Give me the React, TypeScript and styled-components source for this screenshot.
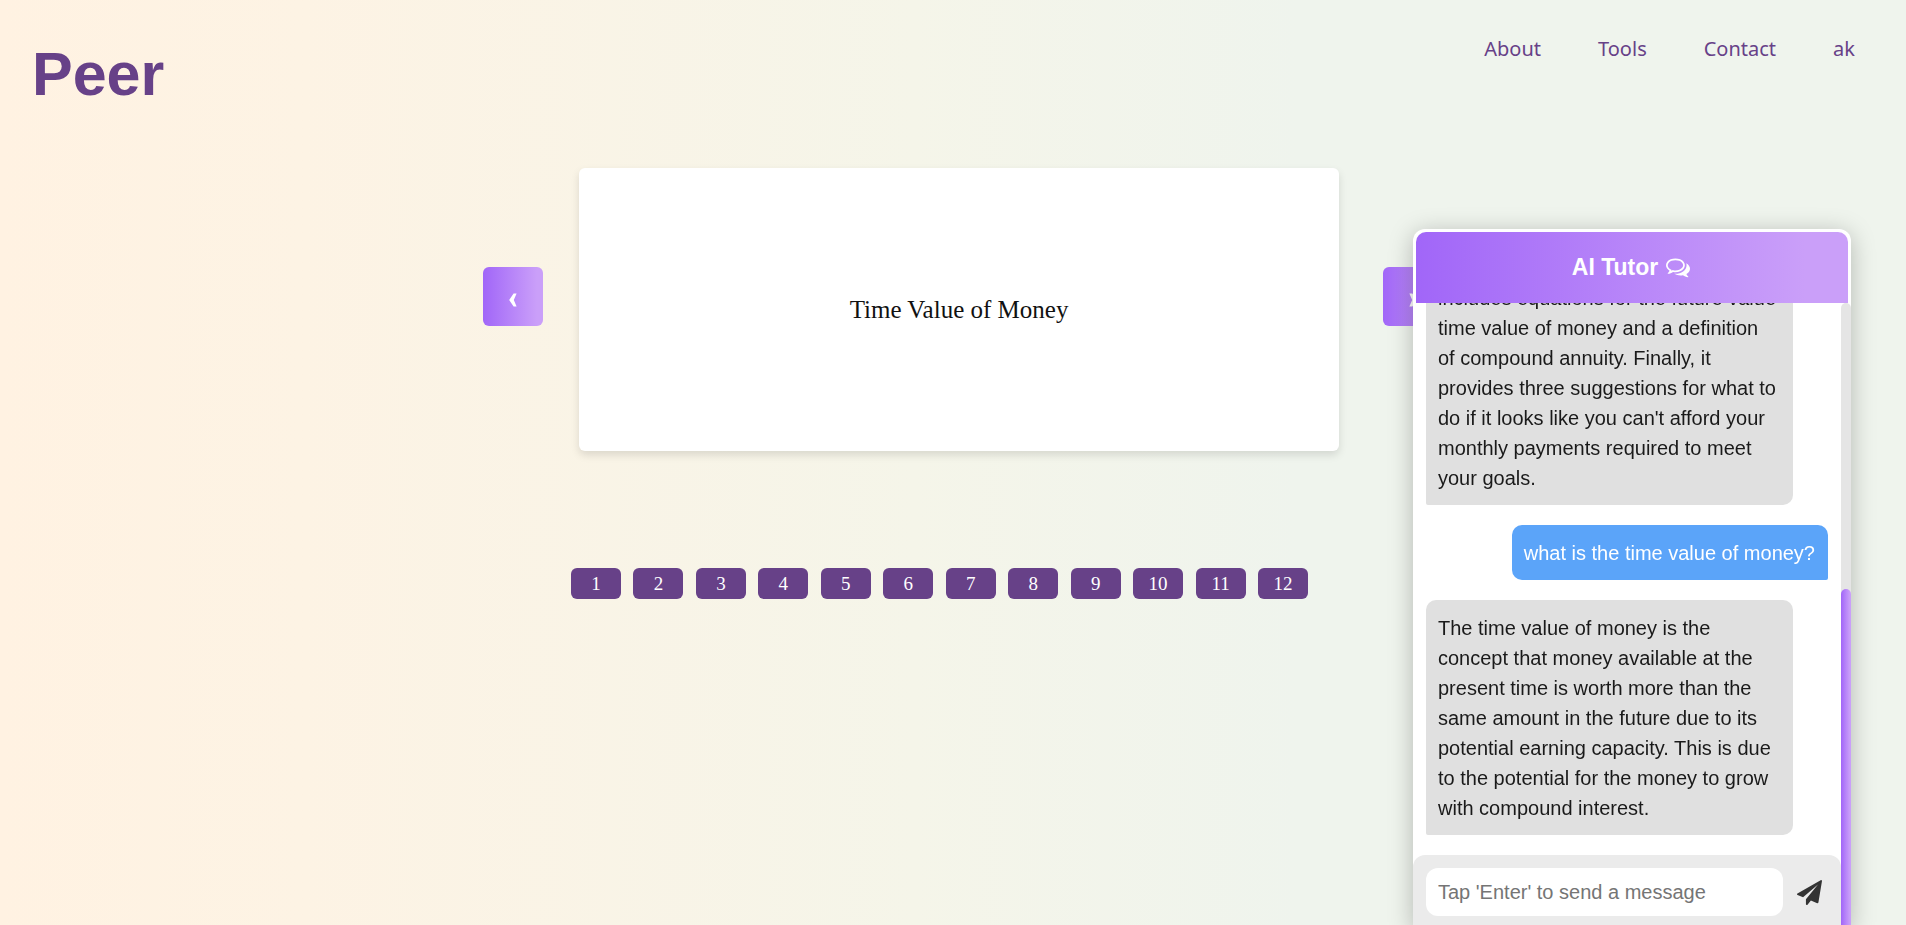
import React from "react";
import styled, { createGlobalStyle } from "styled-components";

const sans = `"Liberation Sans", Arial, sans-serif`;
const serif = `"Liberation Serif", "Times New Roman", serif`;
const violet = "linear-gradient(to right, #a166f8, #ca9ff9 90%)";

const GlobalStyle = createGlobalStyle`
  *, *::before, *::after { box-sizing: border-box; }
  body { margin: 0; font-family: ${serif}; }
`;

const Page = styled.div`
  min-height: 100vh;
  overflow: hidden;
  background: linear-gradient(to right, #fff2e2 0%, #fdf3e4 16%, #f5f5e9 48%, #eff4ed 68%);
`;

const Header = styled.header`
  display: flex;
  justify-content: space-between;
  align-items: flex-start;
  height: 168px;
  padding: 36px 51px 0 32px;
`;

const Brand = styled.h1`
  margin: 0;
  font: bold 61px/76px ${sans};
  color: #674188;
`;

const Nav = styled.nav`
  display: flex;
  gap: 57px;
`;

const NavLink = styled.a`
  font: 20px/26px "Noto Sans", "Open Sans", sans-serif;
  color: #674188;
  text-decoration: none;
`;

const Main = styled.main`
  display: flex;
  flex-direction: column;
  align-items: center;
`;

const Deck = styled.section`
  display: flex;
  gap: 36px;
  padding-left: 20px;
`;

const Card = styled.article`
  display: flex;
  align-items: center;
  justify-content: center;
  width: 760px;
  height: 283px;
  margin-right: 8px;
  border-radius: 6px;
  background: #fff;
  box-shadow: 0 4px 8px rgba(0, 0, 0, 0.12);
  font-size: 25px;
  color: #111;
`;

const StepButton = styled.button`
  display: flex;
  align-items: center;
  justify-content: center;
  width: 60px;
  height: 59px;
  margin-top: 99px;
  padding: 6px 0 0;
  border: 0;
  border-radius: 6px;
  background: ${violet};
  color: #fff;
`;

const Pager = styled.nav`
  display: flex;
  justify-content: space-between;
  width: 737px;
  margin: 117px 27px 0 0;
`;

const PageButton = styled.button`
  width: 50px;
  height: 31px;
  padding: 0;
  border: 0;
  border-radius: 6px;
  background: #674188;
  font: 19px/31px ${serif};
  color: #fff;
`;

const Chat = styled.aside`
  position: fixed;
  top: 229px;
  right: 55px;
  bottom: -4px;
  display: flex;
  flex-direction: column;
  width: 438px;
  border-radius: 12px 12px 0 0;
  background: #fff;
  box-shadow: 0 4px 24px rgba(0, 0, 0, 0.25);
  font: 20px/30px ${sans};
`;

const ChatHeader = styled.h2`
  display: flex;
  flex: none;
  align-items: center;
  justify-content: center;
  gap: 8px;
  height: 71px;
  margin: 3px 3px 0;
  padding: 0 2px 2px 0;
  border-radius: 10px 10px 0 0;
  background: ${violet};
  font-size: 23px;
  color: #fff;
`;

const ChatBody = styled.div`
  display: flex;
  flex: 1;
  min-height: 0;
`;

const Conversation = styled.div`
  display: flex;
  flex: 1;
  flex-direction: column;
  min-width: 0;
`;

const Messages = styled.div`
  display: flex;
  flex: 1;
  flex-direction: column;
  justify-content: flex-end;
  gap: 20px;
  min-height: 0;
  padding: 0 13px 20px;
  overflow: hidden;
`;

const Bubble = styled.p<{ $mine?: boolean }>`
  flex: none;
  align-self: ${(p) => (p.$mine ? "flex-end" : "flex-start")};
  max-width: 367px;
  margin: 0;
  padding: ${(p) => (p.$mine ? "13px 13px 12px 12px" : "13px 15px 12px 12px")};
  border-radius: ${(p) => (p.$mine ? "10px 10px 2px 10px" : "10px 10px 10px 2px")};
  background: ${(p) => (p.$mine ? "#5ba4f9" : "#e0e0e0")};
  color: ${(p) => (p.$mine ? "#fff" : "#1a1a1a")};
`;

const Composer = styled.form`
  display: flex;
  flex: none;
  align-items: center;
  gap: 14px;
  padding: 13px;
  border-radius: 12px 12px 0 0;
  background: #ebebeb;
`;

const MessageInput = styled.input`
  flex: 1;
  min-width: 0;
  height: 48px;
  padding: 0 12px;
  border: 0;
  border-radius: 12px;
  background: #fff;
  font: 20px/30px ${sans};
  &::placeholder { color: #757575; }
`;

const SendButton = styled.button`
  display: flex;
  width: 31px;
  padding: 0;
  border: 0;
  background: none;
  color: #333;
`;

const ScrollTrack = styled.div`
  display: flex;
  flex: none;
  align-items: flex-end;
  width: 10px;
  border-radius: 5px;
  background: #e5e5e5;
`;

const ScrollThumb = styled.div`
  width: 10px;
  height: 340px;
  border-radius: 5px 5px 0 0;
  background: ${violet};
`;

const Chevron = ({ flip = false }: { flip?: boolean }) => (
  <svg width="8" height="14" viewBox="0 0 8 14" fill="currentColor" aria-hidden="true">
    <path d={flip ? "M0.4 0.5H3.4L7.8 7 3.4 13.5H0.4L3.2 7Z" : "M7.6 0.5H4.6L0.2 7 4.6 13.5H7.6L4.8 7Z"} />
  </svg>
);

const CommentsIcon = () => (
  <svg width="24" height="24" viewBox="0 0 1792 1792" fill="currentColor" aria-hidden="true">
    <path d="M704 384q-153 0-286 52t-211.5 141-78.5 191q0 82 53 158t149 132l97 56-35 84q34-20 62-39l44-31 53 10q78 14 153 14 153 0 286-52t211.5-141 78.5-191-78.5-191-211.5-141-286-52zm0-128q191 0 353.5 68.5t256.5 186.5 94 257-94 257-256.5 186.5-353.5 68.5q-86 0-176-16-124 88-278 128-36 9-86 16h-3q-11 0-20.5-8t-11.5-21q-1-3-1-6.5t.5-6.5 2-6l2.5-5 3.5-5.5 4-5 4.5-5 4-4.5q5-6 23-25t26-29.5 22.5-29 25-38.5 20.5-44q-124-72-195-177t-71-224q0-139 94-257t256.5-186.5 353.5-68.5zm822 1169q10 24 20.5 44t25 38.5 22.5 29 26 29.5 23 25q1 1 4 4.5t4.5 5 4 5 3.5 5.5l2.5 5 2 6 .5 6.5-1 6.5q-3 14-13 22t-22 7q-50-7-86-16-154-40-278-128-90 16-176 16-271 0-472-132 58 4 88 4 161 0 309-45t264-129q125-92 192-212t67-254q0-77-23-152 129 71 204 178t75 230q0 120-71 224.5t-195 176.5z" />
  </svg>
);

const PlaneIcon = () => (
  <svg width="25" height="25" viewBox="0 0 1792 1792" fill="currentColor" aria-hidden="true">
    <path d="M1764 11q33 24 27 64l-256 1536q-5 29-32 45-14 8-31 8-11 0-24-5l-453-185-242 295q-18 23-49 23-13 0-22-4-19-7-30.5-23.5t-11.5-36.5v-349l864-1059-1069 925-395-162q-37-14-40-55-2-40 32-59l1664-960q15-9 32-9 20 0 36 11z" />
  </svg>
);

const links = ["About", "Tools", "Contact", "ak"];
const pages = Array.from({ length: 12 }, (_, i) => i + 1);
const messages = [
  {
    mine: false,
    text: "includes equations for the future value time value of money and a definition of compound annuity. Finally, it provides three suggestions for what to do if it looks like you can't afford your monthly payments required to meet your goals.",
  },
  { mine: true, text: "what is the time value of money?" },
  {
    mine: false,
    text: "The time value of money is the concept that money available at the present time is worth more than the same amount in the future due to its potential earning capacity. This is due to the potential for the money to grow with compound interest.",
  },
];

export default function App() {
  return (
    <Page>
      <GlobalStyle />
      <Header>
        <Brand>Peer</Brand>
        <Nav>
          {links.map((l) => (
            <NavLink key={l} href="#">{l}</NavLink>
          ))}
        </Nav>
      </Header>
      <Main>
        <Deck>
          <StepButton aria-label="Previous card"><Chevron /></StepButton>
          <Card>Time Value of Money</Card>
          <StepButton aria-label="Next card"><Chevron flip /></StepButton>
        </Deck>
        <Pager aria-label="Cards">
          {pages.map((n) => (
            <PageButton key={n}>{n}</PageButton>
          ))}
        </Pager>
      </Main>
      <Chat>
        <ChatHeader>AI Tutor <CommentsIcon /></ChatHeader>
        <ChatBody>
          <Conversation>
            <Messages>
              {messages.map((m) => (
                <Bubble key={m.text} $mine={m.mine}>{m.text}</Bubble>
              ))}
            </Messages>
            <Composer onSubmit={(e) => e.preventDefault()}>
              <MessageInput aria-label="Message" placeholder="Tap 'Enter' to send a message" />
              <SendButton aria-label="Send"><PlaneIcon /></SendButton>
            </Composer>
          </Conversation>
          <ScrollTrack><ScrollThumb /></ScrollTrack>
        </ChatBody>
      </Chat>
    </Page>
  );
}
